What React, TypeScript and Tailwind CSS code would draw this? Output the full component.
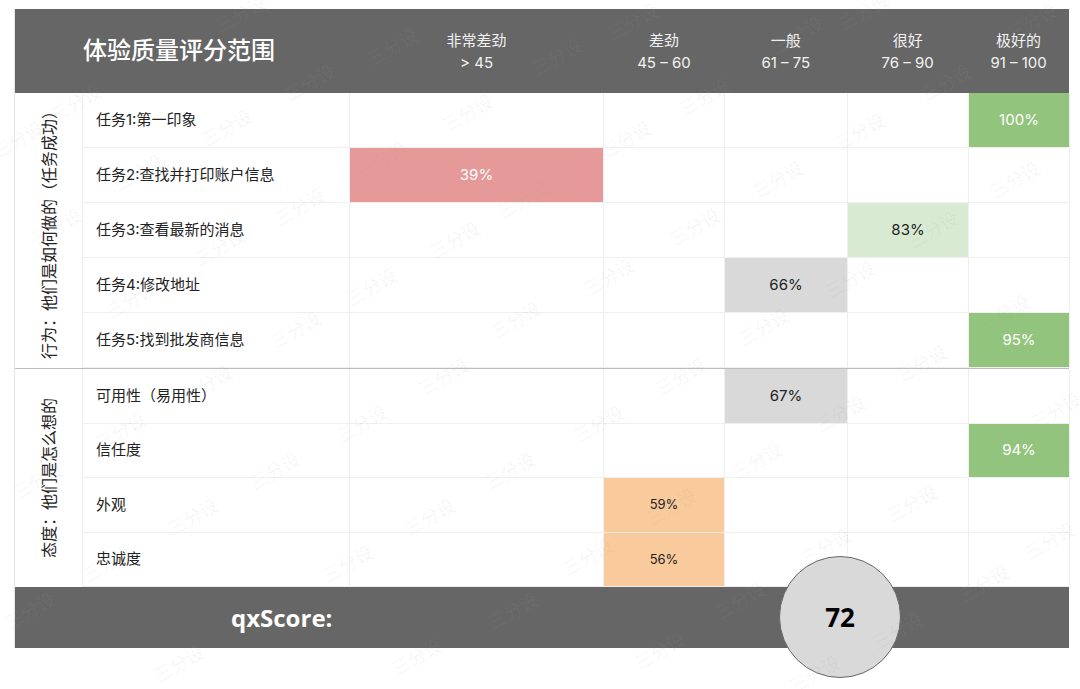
import React from 'react';

type Cell = { col: number; value: string; tone: 'red' | 'green' | 'pale' | 'gray' | 'orange' };

interface Row {
  label: string;
  cell: Cell;
}

const COLS = ['w-[254px]', 'w-[121px]', 'w-[123px]', 'w-[121px]', 'w-[101px]'];

const HEADS = [
  { name: '非常差劲', range: '> 45', w: 'w-[254px]' },
  { name: '差劲', range: '45 – 60', w: 'w-[121px]' },
  { name: '一般', range: '61 – 75', w: 'w-[123px]' },
  { name: '很好', range: '76 – 90', w: 'w-[121px]' },
  { name: '极好的', range: '91 – 100', w: 'w-[101px]' },
];

const BEHAVIOR: Row[] = [
  { label: '任务1:第一印象', cell: { col: 4, value: '100%', tone: 'green' } },
  { label: '任务2:查找并打印账户信息', cell: { col: 0, value: '39%', tone: 'red' } },
  { label: '任务3:查看最新的消息', cell: { col: 3, value: '83%', tone: 'pale' } },
  { label: '任务4:修改地址', cell: { col: 2, value: '66%', tone: 'gray' } },
  { label: '任务5:找到批发商信息', cell: { col: 4, value: '95%', tone: 'green' } },
];

const ATTITUDE: Row[] = [
  { label: '可用性（易用性）', cell: { col: 2, value: '67%', tone: 'gray' } },
  { label: '信任度', cell: { col: 4, value: '94%', tone: 'green' } },
  { label: '外观', cell: { col: 1, value: '59%', tone: 'orange' } },
  { label: '忠诚度', cell: { col: 1, value: '56%', tone: 'orange' } },
];

const TONE: Record<Cell['tone'], string> = {
  red: 'bg-[#e69999] text-white text-[15px]',
  green: 'bg-[#93c47d] text-white text-[15px]',
  pale: 'bg-[#d9ead3] text-[#222] text-[15px]',
  gray: 'bg-[#d9d9d9] text-[#222] text-[15px]',
  orange: 'bg-[#f9cb9c] text-[#222] text-[13px]',
};

// watermark centres, read off the screenshot
const MARKS: Array<[number, number]> = [
  [227, 128], [468, 113], [382, 160], [300, 207], [455, 240], [220, 247], [372, 287], [131, 300],
  [296, 330], [516, 320], [76, 103], [57, 227], [393, 47], [310, 83], [241, 14], [138, 173],
  [523, 200], [18, 140],
  [633, 22], [557, 57], [864, 12], [705, 97], [946, 83], [626, 140], [860, 132], [1015, 180],
  [778, 180], [695, 227], [933, 230], [609, 277], [850, 280], [1005, 313], [764, 327], [798, 35],
  [1032, 22],
  [207, 384], [444, 377], [121, 431], [362, 424], [38, 481], [275, 471], [510, 471], [193, 517],
  [430, 517], [107, 564], [348, 564], [30, 611], [179, 664], [417, 657], [513, 611],
  [681, 377], [599, 424], [840, 414], [922, 364], [757, 461], [912, 504], [671, 507], [588, 557],
  [826, 547], [984, 584], [740, 601], [898, 631], [660, 651], [815, 674], [1056, 411], [1050, 541],
];

const font = { fontFamily: 'Inter, "Noto Sans CJK SC", sans-serif' };
const open = { fontFamily: '"Open Sans", "Liberation Sans", sans-serif' };

const TableRow: React.FC<{ row: Row; h: string }> = ({ row, h }) => (
  <div className={`flex ${h}`}>
    <div className="w-[267px] flex items-center pl-[13px] text-[15px] text-[#222] border-r border-b border-[#efefef]">
      {row.label}
    </div>
    {COLS.map((w, i) => {
      const hit = row.cell.col === i;
      return (
        <div
          key={i}
          className={`${w} flex items-center justify-center border-r border-b border-[#efefef] ${
            hit ? TONE[row.cell.tone] : ''
          }`}
        >
          {hit ? row.cell.value : null}
        </div>
      );
    })}
  </div>
);

const Group: React.FC<{ title: string; rows: Row[]; h: string }> = ({ title, rows, h }) => (
  <div className="flex">
    <div className="w-[68px] flex items-center justify-center border-r border-[#efefef] overflow-visible">
      <span className="whitespace-nowrap -rotate-90 text-[16px] text-[#222]">{title}</span>
    </div>
    <div className="flex flex-col">
      {rows.map((r) => (
        <TableRow key={r.label} row={r} h={h} />
      ))}
    </div>
  </div>
);

export default function App() {
  return (
    <div className="relative w-[1080px] h-[689px] bg-white overflow-hidden pt-[9px] pl-[14px]" style={font}>
      <div className="relative w-[1055px] border-l border-[#e5e5e5]">
        <div className="flex h-[84px] bg-[#666666] text-white">
          <div className="w-[68px]" />
          <div className="w-[267px] flex items-center text-[24px] font-medium">体验质量评分范围</div>
          {HEADS.map((c) => (
            <div key={c.name} className={`${c.w} flex flex-col items-center justify-center text-[15px] leading-[22px] text-[#f2f2f2] pt-[2px]`}>
              <span>{c.name}</span>
              <span>{c.range}</span>
            </div>
          ))}
        </div>
        <Group title="行为：他们是如何做的（任务成功）" rows={BEHAVIOR} h="h-[55px]" />
        <div className="h-px bg-[#bdbdbd]" />
        <Group title="态度：他们是怎么想的" rows={ATTITUDE} h="h-[54.5px]" />
        <div className="flex items-center h-[61px] bg-[#666666]">
          <span className="ml-[216px] text-[24px] font-bold text-white" style={open}>
            qxScore:
          </span>
        </div>
        <div className="absolute left-[764px] top-[547px] w-[122px] h-[122px] rounded-full bg-[#d9d9d9] border border-[#666] flex items-center justify-center">
          <span className="text-[26px] font-bold text-black" style={open}>
            72
          </span>
        </div>
      </div>

      {/* watermark */}
      <div className="absolute inset-0 pointer-events-none" aria-hidden="true">
        {MARKS.map(([x, y], i) => (
          <span
            key={i}
            className="absolute -translate-x-1/2 -translate-y-1/2 -rotate-30 whitespace-nowrap text-[18px] font-light text-[rgba(160,160,160,0.15)]"
            style={{ left: x, top: y }}
          >
            三分设
          </span>
        ))}
      </div>
    </div>
  );
}
